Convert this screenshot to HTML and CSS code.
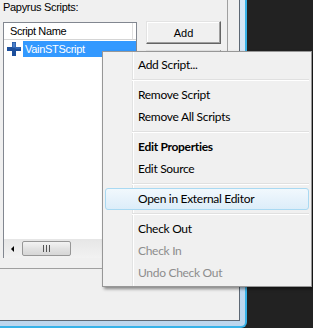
FILE: index.html
```html
<!DOCTYPE html>
<html lang="en">
<head>
    <meta charset="UTF-8">
    <title>Papyrus Scripts</title>
    <link rel="stylesheet" href="styles.css">
</head>
<body>
    <div class="window">
        <div class="client">
            <div class="panel">
                <div class="label">Papyrus Scripts:</div>
                <div class="panel-body">
                    <!-- list of scripts -->
                    <div class="listbox">
                        <div class="list-header">
                            <span class="col">Script Name</span>
                        </div>
                        <div class="list-rows">
                            <div class="list-row">
                                <svg class="plus" width="14" height="14" viewBox="0 0 14 14">
                                    <path d="M5 0h4v5h5v4H9v5H5V9H0V5h5z" fill="#1d4f9c"/>
                                    <path d="M5.5 0.5h3v5h5v1H8.5v-1H5.5z" fill="#4a7fc8"/>
                                </svg>
                                <span class="row-text">VainSTScript</span>
                            </div>
                        </div>
                        <div class="hscroll">
                            <span class="arrow-left"></span>
                            <span class="thumb"><span class="grip"></span></span>
                        </div>
                    </div>

                    <!-- buttons (the second one is hidden behind the menu) -->
                    <div class="buttons">
                        <button class="btn">Add</button>
                        <button class="btn"></button>
                    </div>
                </div>
            </div>
        </div>
    </div>

    <!-- context menu -->
    <div class="menu">
        <div class="item">Add Script...</div>
        <div class="sep"></div>
        <div class="item">Remove Script</div>
        <div class="item">Remove All Scripts</div>
        <div class="sep"></div>
        <div class="item bold">Edit Properties</div>
        <div class="item">Edit Source</div>
        <div class="sep"></div>
        <div class="item hover">Open in External Editor</div>
        <div class="sep"></div>
        <div class="item">Check Out</div>
        <div class="item disabled">Check In</div>
        <div class="item disabled">Undo Check Out</div>
    </div>
</body>
</html>
```

FILE: styles.css
```css
body {
    margin: 0;
    width: 313px;
    height: 328px;
    overflow: hidden;
    background: #222222;
    font-family: "Liberation Sans", Arial, sans-serif;
    font-size: 11px;
    position: relative;
}
.window {
    box-sizing: border-box;
    width: 247px;
    height: 328px;
    padding: 0 5px 5px 0;
    background: linear-gradient(to bottom, #d6e7f6, #bcd6ee);
    border-right: 2px solid #38b2e8;
    border-bottom: 2px solid #38b2e8;
    border-bottom-right-radius: 6px;
}
.client {
    box-sizing: border-box;
    width: 240px;
    height: 321px;
    background: #f0f0f0;
    border-right: 1px solid #5d6874;
    border-bottom: 1px solid #5d6874;
}
.panel {
    box-sizing: border-box;
    width: 228px;
    height: 269px;
    border-right: 1px solid #a0a0a0;
    border-bottom: 1px solid #a0a0a0;
}
.label {
    height: 22px;
    padding-left: 3px;
    line-height: 15px;
    letter-spacing: -0.3px;
    color: #000;
}
.panel-body {
    display: flex;
    align-items: flex-start;
}
.listbox {
    box-sizing: border-box;
    margin-left: 3px;
    width: 134px;
    height: 236px;
    background: #fff;
    border: 1px solid #828790;
    border-bottom: none;
    display: flex;
    flex-direction: column;
}
.list-header {
    height: 16px;
    border-bottom: 1px solid #d5d5d5;
    display: flex;
}
.col {
    box-sizing: border-box;
    width: 129px;
    padding-left: 6px;
    line-height: 16px;
    letter-spacing: -0.4px;
    border-right: 1px solid #e0e0e0;
}
.list-rows {
    flex: 1;
    padding-top: 1px;
}
.list-row {
    height: 16px;
    display: flex;
    align-items: center;
    padding-left: 3px;
}
.plus {
    margin-right: 2px;
    flex: none;
}
.row-text {
    flex: 1;
    height: 16px;
    line-height: 16px;
    padding-left: 2px;
    background: #3399ff;
    color: #fff;
    letter-spacing: -0.3px;
}
.hscroll {
    height: 19px;
    background: linear-gradient(to bottom, #e6e6e6, #f2f2f2);
    display: flex;
    align-items: center;
}
.arrow-left {
    width: 0;
    height: 0;
    margin: 0 8px 0 7px;
    border-top: 3px solid transparent;
    border-bottom: 3px solid transparent;
    border-right: 3px solid #000;
}
.thumb {
    box-sizing: border-box;
    width: 49px;
    height: 15px;
    border: 1px solid #979797;
    border-radius: 2px;
    background: linear-gradient(to bottom, #f3f3f3, #e2e2e2 50%, #d6d6d6);
    display: flex;
    justify-content: center;
    align-items: center;
}
.grip {
    width: 7px;
    height: 7px;
    background: repeating-linear-gradient(to right, #555 0 1px, transparent 1px 3px);
}
.buttons {
    margin-left: 9px;
    margin-top: -1px;
    display: flex;
    flex-direction: column;
    gap: 6px;
}
.btn {
    box-sizing: border-box;
    width: 75px;
    height: 23px;
    padding: 0;
    font-family: "Liberation Sans", Arial, sans-serif;
    font-size: 11px;
    color: #000;
    background: #f0f0f0;
    border: 1px solid;
    border-color: #e3e3e3 #646464 #646464 #e3e3e3;
    box-shadow: inset -1px -1px 0 #a0a0a0, inset 1px 1px 0 #fff;
}
.menu {
    position: absolute;
    left: 102px;
    top: 51px;
    box-sizing: border-box;
    width: 210px;
    height: 236px;
    padding: 2px;
    border: 1px solid #979797;
    background: linear-gradient(to right, #f1f1f1 29px, #e2e3e3 29px 30px, #fff 30px 31px, #f0f0f0 31px);
    box-shadow: 2px 2px 3px rgba(0, 0, 0, 0.45);
    font-family: Lato, "Noto Sans", sans-serif;
    font-size: 12px;
    letter-spacing: -0.3px;
    color: #000;
}
.item {
    box-sizing: border-box;
    height: 22px;
    line-height: 20px;
    padding-left: 32px;
    border: 1px solid transparent;
    border-radius: 3px;
}
.item.bold {
    font-weight: bold;
}
.item.disabled {
    color: #8d8d8d;
}
.item.hover {
    border-color: #a9d9f2;
    background: linear-gradient(to bottom, #f1f8fd, #dcedf9);
}
.sep {
    height: 8px;
    margin-left: 27px;
    margin-right: 0;
    background: linear-gradient(to bottom, transparent 3px, #e0e0e0 3px 4px, #fff 4px 5px, transparent 5px);
}
```
